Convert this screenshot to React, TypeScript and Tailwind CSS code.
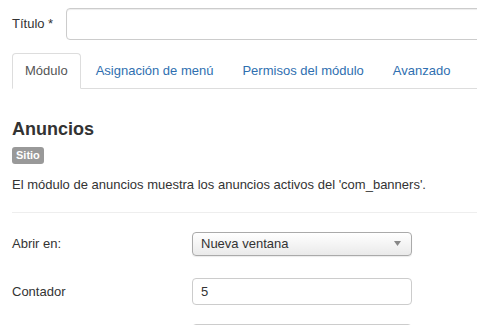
export default function App() {
  const tabs = ["Asignación de menú", "Permisos del módulo", "Avanzado"];

  return (
    <div className="w-[477px] h-[325px] overflow-hidden bg-white pl-3 text-[13px] text-[#333] font-['Liberation_Sans',Arial,sans-serif]">
      {/* titulo */}
      <div className="flex items-center pt-2">
        <label className="w-[54px] shrink-0">Título *</label>
        <input
          type="text"
          className="h-8 w-[460px] shrink-0 rounded border border-[#ccc] bg-white px-2 shadow-[inset_0_1px_1px_rgba(0,0,0,0.075)] outline-none"
        />
      </div>

      {/* tabs */}
      <ul className="mt-[13px] flex h-[36px] w-[480px] border-b border-[#ddd]">
        <li className="-mb-px mr-[2px] flex h-[36px] items-center rounded-t border border-[#ddd] border-b-white bg-white px-3 text-[#555]">
          Módulo
        </li>
        {tabs.map((t) => (
          <li
            key={t}
            className="mr-[3px] flex h-[35px] items-center px-[13px] text-[#2f6fb0]"
          >
            {t}
          </li>
        ))}
      </ul>

      {/* info modulo */}
      <h2 className="mt-[30px] text-[18px] font-bold leading-5 text-[#333]">
        Anuncios
      </h2>
      <span className="mt-2 inline-flex h-[17px] items-center rounded-[3px] bg-[#999] px-1 text-[11px] font-bold text-white">
        Sitio
      </span>
      <p className="mt-[11px] leading-[18px]">
        El módulo de anuncios muestra los anuncios activos del 'com_banners'.
      </p>
      <div className="mt-[18px] h-px w-[480px] bg-[#eee]" />

      {/* campos */}
      <div className="mt-[19px] flex items-center">
        <label className="w-[180px] shrink-0">Abrir en:</label>
        <div className="flex h-6 w-[220px] items-center justify-between rounded border border-[#aaa] bg-linear-to-b from-white to-[#eaeaea] pl-2 pr-[10px] shadow-[0_1px_1px_rgba(0,0,0,0.08)]">
          <span>Nueva ventana</span>
          <svg width="7" height="5" viewBox="0 0 7 5">
            <path d="M0 0h7L3.5 5z" fill="#888" />
          </svg>
        </div>
      </div>

      <div className="mt-[22px] flex items-center">
        <label className="w-[180px] shrink-0">Contador</label>
        <input
          type="text"
          defaultValue="5"
          className="h-[27px] w-[220px] rounded border border-[#ccc] bg-white px-2 text-[13px] text-[#333] outline-none"
        />
      </div>

      <div className="mt-[19px] flex items-center">
        <div className="w-[180px] shrink-0" />
        <input
          type="text"
          className="h-[27px] w-[220px] rounded border border-[#ccc] bg-white px-2 outline-none"
        />
      </div>
    </div>
  );
}
